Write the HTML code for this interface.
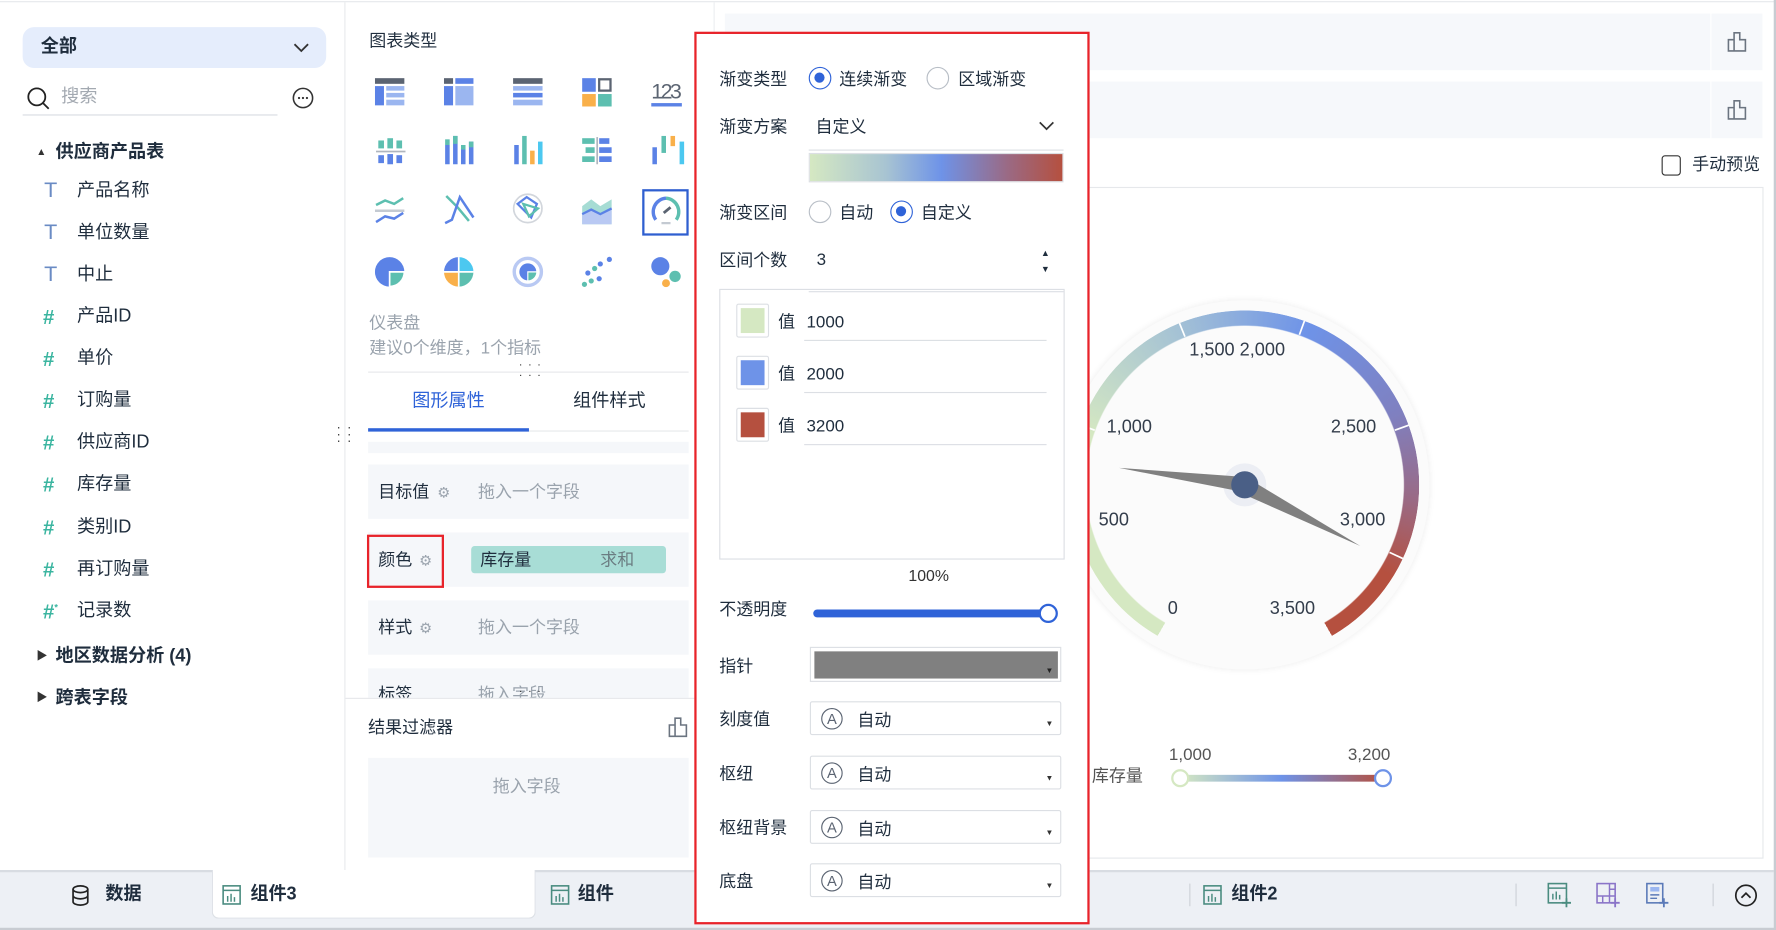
<!DOCTYPE html>
<html><head><meta charset="utf-8">
<style>
*{box-sizing:border-box;margin:0;padding:0}
html,body{width:1776px;height:930px;overflow:hidden;background:#fff}
body{font-family:"Liberation Sans","Noto Sans CJK SC",sans-serif;color:#1f2d3d}
#w{position:absolute;left:0;top:0;width:1568px;height:821px;transform:scale(1.13265,1.1328);transform-origin:0 0;background:#fff;font-size:15px}
.a{position:absolute}
.t{position:absolute;white-space:nowrap;line-height:1}
.g{color:#9aa3ad}
.b{font-weight:bold}
.row{position:absolute;left:325px;width:283px;height:48px;background:#f5f7fa}
.lbl{position:absolute;left:635px;font-size:15px;color:#1f2d3d;white-space:nowrap;line-height:1}
.radio{position:absolute;width:20px;height:20px;border:1px solid #b8bec6;border-radius:50%;background:#fff}
.radio.on{border:1.5px solid #2f63d8}
.radio.on::after{content:"";position:absolute;left:4px;top:4px;width:9px;height:9px;border-radius:50%;background:#2f63d8}
.sel{position:absolute;left:715px;width:222px;height:30px;border:1px solid #dcdfe4;border-radius:2px;background:#fff}
.sel .ic{position:absolute;left:9px;top:5px;width:19px;height:19px;border:1.5px solid #5b6472;border-radius:50%;font-size:13px;text-align:center;line-height:17px;color:#5b6472}
.sel .tx{position:absolute;left:41px;top:6px;font-size:15px}
.sel .ar{position:absolute;right:6px;top:16px;font-size:7px;color:#333}
.sw{position:absolute;left:650px;width:29px;height:30px;border:1px solid #dcdfe4;background:#fff;border-radius:2px}
.sw i{position:absolute;left:3px;top:3px;width:21px;height:22px}
.ul{position:absolute;height:1px;background:#dcdfe4}
.tree .t{margin-top:2px}
</style></head><body><div id="w">

<div class="a" style="left:0;top:1px;width:1568px;height:1px;background:#e6e8eb"></div>

<!-- LEFT SIDEBAR -->
<div class="a" style="left:304px;top:2px;width:1px;height:766px;background:#e8eaed"></div>
<div class="a" style="left:20px;top:24px;width:268px;height:36px;background:#e5edfc;border-radius:10px"></div>
<div class="t b" style="left:36px;top:34px;font-size:16px">全部</div>
<svg class="a" style="left:258px;top:36px" width="16" height="12"><path d="M2 3l6 6 6-6" fill="none" stroke="#333" stroke-width="1.6"/></svg>
<svg class="a" style="left:23px;top:76px" width="22" height="22"><circle cx="9.5" cy="9.5" r="7.5" fill="none" stroke="#222" stroke-width="1.6"/><path d="M15 15l5 5" stroke="#222" stroke-width="1.6"/></svg>
<div class="t" style="left:54px;top:78px;font-size:16px;color:#a3a9b1">搜索</div>
<div class="a" style="left:20px;top:101px;width:225px;height:1px;background:#d9dce1"></div>
<svg class="a" style="left:257px;top:76px" width="21" height="21"><circle cx="10.5" cy="10.5" r="8.5" fill="none" stroke="#333" stroke-width="1.4"/><circle cx="7" cy="10.5" r="1" fill="#333"/><circle cx="10.5" cy="10.5" r="1" fill="#333"/><circle cx="14" cy="10.5" r="1" fill="#333"/></svg>
<div class="tree">
<div class="t" style="left:32px;top:128px;font-size:9px;color:#333">▲</div>
<div class="t b" style="left:49px;top:125px;font-size:16px;color:#1f2d3d">供应商产品表</div>
<div class="t" style="left:39px;top:157px;font-size:19px;color:#6a8bc4">T</div><div class="t" style="left:68px;top:159px;font-size:16px">产品名称</div>
<div class="t" style="left:39px;top:194px;font-size:19px;color:#6a8bc4">T</div><div class="t" style="left:68px;top:196px;font-size:16px">单位数量</div>
<div class="t" style="left:39px;top:231px;font-size:19px;color:#6a8bc4">T</div><div class="t" style="left:68px;top:233px;font-size:16px">中止</div>
<div class="t b" style="left:38px;top:269px;font-size:18px;color:#3bb5a0">#</div><div class="t" style="left:68px;top:270px;font-size:16px">产品ID</div>
<div class="t b" style="left:38px;top:306px;font-size:18px;color:#3bb5a0">#</div><div class="t" style="left:68px;top:307px;font-size:16px">单价</div>
<div class="t b" style="left:38px;top:343px;font-size:18px;color:#3bb5a0">#</div><div class="t" style="left:68px;top:344px;font-size:16px">订购量</div>
<div class="t b" style="left:38px;top:380px;font-size:18px;color:#3bb5a0">#</div><div class="t" style="left:68px;top:381px;font-size:16px">供应商ID</div>
<div class="t b" style="left:38px;top:417px;font-size:18px;color:#3bb5a0">#</div><div class="t" style="left:68px;top:418px;font-size:16px">库存量</div>
<div class="t b" style="left:38px;top:455px;font-size:18px;color:#3bb5a0">#</div><div class="t" style="left:68px;top:456px;font-size:16px">类别ID</div>
<div class="t b" style="left:38px;top:492px;font-size:18px;color:#3bb5a0">#</div><div class="t" style="left:68px;top:493px;font-size:16px">再订购量</div>
<div class="t b" style="left:38px;top:529px;font-size:18px;color:#3bb5a0">#<sup style="font-size:8px">*</sup></div><div class="t" style="left:68px;top:530px;font-size:16px">记录数</div>
<div class="t" style="left:32px;top:573px;font-size:10px;color:#333">▶</div>
<div class="t b" style="left:49px;top:570px;font-size:16px">地区数据分析 (4)</div>
<div class="t" style="left:32px;top:610px;font-size:10px;color:#333">▶</div>
<div class="t b" style="left:49px;top:607px;font-size:16px">跨表字段</div>
</div>
<div class="t" style="left:297px;top:374px;font-size:12px;color:#444;line-height:6px;letter-spacing:1px">· ·<br>· ·<br>· ·</div>

<!-- MIDDLE PANEL -->
<div class="t" style="left:326px;top:29px;font-size:15px">图表类型</div>
<svg class="a" style="left:331px;top:67px" width="280" height="190">
 <g transform="translate(0,2)"><rect x="0" y="0" width="26" height="5" fill="#5b6472"/><rect x="0" y="7" width="8" height="17" fill="#5b82e6"/><rect x="10" y="7" width="16" height="4" fill="#9bb6f0"/><rect x="10" y="13" width="16" height="4" fill="#9bb6f0"/><rect x="10" y="19" width="16" height="5" fill="#9bb6f0"/></g>
 <g transform="translate(61,2)"><rect x="0" y="0" width="8" height="5" fill="#5b6472"/><rect x="10" y="0" width="16" height="5" fill="#5b82e6"/><rect x="0" y="7" width="8" height="17" fill="#5b82e6"/><rect x="10" y="7" width="16" height="17" fill="#9bb6f0"/></g>
 <g transform="translate(122,2)"><rect x="0" y="0" width="26" height="5" fill="#5b6472"/><rect x="0" y="7" width="26" height="4" fill="#9bb6f0"/><rect x="0" y="13" width="26" height="4" fill="#5b82e6"/><rect x="0" y="19" width="26" height="5" fill="#9bb6f0"/></g>
 <g transform="translate(183,2)"><rect x="0" y="0" width="12" height="12" fill="#5b82e6"/><rect x="15" y="1" width="10" height="10" fill="none" stroke="#5b6472" stroke-width="2"/><rect x="0" y="14" width="12" height="11" fill="#f9b04a"/><rect x="14" y="14" width="12" height="11" fill="#5dbfb0"/></g>
 <text x="244" y="20" font-size="19" fill="#5b6472" font-family="Liberation Sans" textLength="27">123</text><rect x="244" y="24" width="27" height="3" fill="#5b82e6"/>
 <g transform="translate(1,55)"><rect x="2" y="2" width="5" height="7" fill="#5dbfb0"/><rect x="10" y="0" width="5" height="9" fill="#5dbfb0"/><rect x="18" y="2" width="5" height="7" fill="#5dbfb0"/><rect x="0" y="11" width="26" height="1.5" fill="#b0b6be"/><rect x="2" y="15" width="5" height="7" fill="#5b82e6"/><rect x="10" y="14" width="5" height="9" fill="#5b82e6"/><rect x="18" y="15" width="5" height="7" fill="#5b82e6"/></g>
 <g transform="translate(62,53)"><rect x="0" y="8" width="4" height="17" fill="#5b82e6"/><rect x="0" y="3" width="4" height="5" fill="#5dbfb0"/><rect x="7" y="0" width="4" height="25" fill="#5b82e6"/><rect x="7" y="0" width="4" height="7" fill="#5dbfb0"/><rect x="14" y="12" width="4" height="13" fill="#5b82e6"/><rect x="14" y="8" width="4" height="4" fill="#5dbfb0"/><rect x="21" y="5" width="4" height="20" fill="#5b82e6"/><rect x="21" y="5" width="4" height="5" fill="#5dbfb0"/></g>
 <g transform="translate(123,53)"><rect x="0" y="8" width="4" height="17" fill="#5b82e6"/><rect x="7" y="0" width="4" height="25" fill="#5dbfb0"/><rect x="14" y="13" width="4" height="12" fill="#f9b04a"/><rect x="21" y="5" width="4" height="20" fill="#4cc8f0"/></g>
 <g transform="translate(183,54)"><rect x="0" y="1" width="11" height="5" fill="#5dbfb0"/><rect x="15" y="1" width="9" height="5" fill="#5b82e6"/><rect x="3" y="9" width="8" height="5" fill="#5dbfb0"/><rect x="15" y="9" width="11" height="5" fill="#5b82e6"/><rect x="0" y="17" width="11" height="5" fill="#5dbfb0"/><rect x="15" y="17" width="11" height="5" fill="#5b82e6"/><rect x="12.5" y="0" width="1.5" height="24" fill="#b0b6be"/></g>
 <g transform="translate(245,53)"><rect x="0" y="10" width="4" height="15" fill="#5b82e6"/><rect x="8" y="0" width="4" height="15" fill="#5dbfb0"/><rect x="16" y="0" width="4" height="9" fill="#f9b04a"/><rect x="24" y="5" width="4" height="20" fill="#4cc8f0"/></g>
 <g transform="translate(0,106)" fill="none" stroke-width="2.2"><path d="M1 8l8-4 8 3 8-5" stroke="#5dbfb0"/><path d="M0 13h26" stroke="#c4cad2"/><path d="M1 23l8-5 8 2 8-5" stroke="#5b82e6"/></g>
 <g transform="translate(61,104)" fill="none" stroke-width="2.2"><path d="M2 2l10 10 10 12" stroke="#5dbfb0"/><path d="M1 26l6-3 7-20 12 18" stroke="#5b82e6"/></g>
 <g transform="translate(122,104)" fill="none"><circle cx="13" cy="13" r="12.5" stroke="#d2d6dc" stroke-width="1.5"/><path d="M4 9l8-6 9 6-5 12z" stroke="#5b82e6" stroke-width="2"/><path d="M9 9l13 4-8 7z" stroke="#5dbfb0" stroke-width="2"/></g>
 <g transform="translate(183,105)"><path d="M0 10l8-6 8 6 10-6v22H0z" fill="#5dbfb0" opacity=".55"/><path d="M0 17l8-4 8 4 10-5v14H0z" fill="#b9c9f3"/><path d="M0 17l8-4 8 4 10-5" fill="none" stroke="#5b82e6" stroke-width="2"/></g>
 <g transform="translate(243,106)" fill="none" stroke-width="3"><path d="M5 21A12 12 0 0 1 14 2" stroke="#5b82e6"/><path d="M14 2A12 12 0 0 1 23 21" stroke="#5dbfb0"/><path d="M10 24h8" stroke="#c4cad2" stroke-width="2"/><path d="M12 15l6-5" stroke="#5b6472" stroke-width="2.5"/></g>
 <g transform="translate(0,160)"><circle cx="13" cy="13" r="13" fill="#5b82e6"/><path d="M13 13h13a13 13 0 0 1-13 13z" fill="#5dbfb0" stroke="#fff" stroke-width="1.5"/></g>
 <g transform="translate(61,160)"><path d="M13 13V0a13 13 0 0 0-13 13z" fill="#5b82e6"/><path d="M13 13V0a13 13 0 0 1 13 13z" fill="#4cc8f0"/><path d="M13 13H0a13 13 0 0 0 13 13z" fill="#f9b04a"/><path d="M13 13h13a13 13 0 0 1-13 13z" fill="#5dbfb0"/><path d="M13 0v26M0 13h26" stroke="#fff" stroke-width="1.5"/></g>
 <g transform="translate(122,160)"><circle cx="13" cy="13" r="12" fill="none" stroke="#b9c9f3" stroke-width="3"/><circle cx="13" cy="13" r="7.5" fill="#5b82e6"/><path d="M13 13h8a8 8 0 0 1-8 8z" fill="#5dbfb0" stroke="#fff" stroke-width="1"/></g>
 <g transform="translate(183,160)"><circle cx="2" cy="24" r="2.3" fill="#5dbfb0"/><circle cx="8" cy="21" r="2.3" fill="#5dbfb0"/><circle cx="15" cy="19" r="2.3" fill="#5b82e6"/><circle cx="5" cy="14" r="2.3" fill="#5b82e6"/><circle cx="11" cy="10" r="2.3" fill="#5dbfb0"/><circle cx="16" cy="6" r="2.3" fill="#5b82e6"/><circle cx="24" cy="2" r="2.3" fill="#5b82e6"/></g>
 <g transform="translate(244,160)"><circle cx="8" cy="8" r="8" fill="#5b82e6"/><circle cx="21" cy="17" r="5" fill="#5dbfb0"/><circle cx="13" cy="23" r="3.5" fill="#f9b04a"/></g>
</svg>
<div class="a" style="left:567px;top:167px;width:41px;height:41px;border:2px solid #2f5fd0"></div>
<div class="t g" style="left:326px;top:278px;font-size:15px">仪表盘</div>
<div class="t g" style="left:326px;top:300px;font-size:15px">建议0个维度，1个指标</div>
<div class="a" style="left:325px;top:328px;width:283px;height:1px;background:#e6e8eb"></div>
<div class="t" style="left:458px;top:318px;font-size:10px;color:#333;letter-spacing:1px;line-height:9px">· · ·<br>· · ·</div>
<div class="t" style="left:364px;top:347px;font-size:16px;color:#2f63d8">图形属性</div>
<div class="t" style="left:506px;top:347px;font-size:16px">组件样式</div>
<div class="a" style="left:325px;top:380px;width:283px;height:1px;background:#e6e8eb"></div>
<div class="a" style="left:325px;top:378px;width:142px;height:3px;background:#2f63d8"></div>
<div class="row" style="top:390px;height:10px"></div>
<div class="row" style="top:410px"></div>
<div class="t" style="left:334px;top:427px;font-size:15px">目标值</div><div class="t g" style="left:386px;top:428px;font-size:13px">⚙</div>
<div class="t g" style="left:422px;top:427px;font-size:15px">拖入一个字段</div>
<div class="row" style="top:470px"></div>
<div class="a" style="left:324px;top:472px;width:68px;height:47px;border:2px solid #e8232a"></div>
<div class="t" style="left:334px;top:487px;font-size:15px">颜色</div><div class="t g" style="left:370px;top:488px;font-size:13px">⚙</div>
<div class="a" style="left:416px;top:482px;width:172px;height:24px;background:#a8ddd6;border-radius:3px"></div>
<div class="t" style="left:424px;top:487px;font-size:15px">库存量</div>
<div class="t" style="left:530px;top:487px;font-size:15px;color:#6b7d82">求和</div>
<div class="row" style="top:530px"></div>
<div class="t" style="left:334px;top:547px;font-size:15px">样式</div><div class="t g" style="left:370px;top:548px;font-size:13px">⚙</div>
<div class="t g" style="left:422px;top:547px;font-size:15px">拖入一个字段</div>
<div class="row" style="top:590px;height:26px;overflow:hidden"><div class="t" style="left:9px;top:16px;font-size:15px;color:#1f2d3d">标签</div><div class="t g" style="left:97px;top:16px;font-size:15px">拖入字段</div></div>
<div class="a" style="left:305px;top:616px;width:325px;height:1px;background:#e6e8eb"></div>
<div class="t" style="left:458px;top:606px;font-size:10px;color:#333;letter-spacing:1px">· · ·</div>
<div class="t" style="left:325px;top:635px;font-size:15px">结果过滤器</div>
<svg class="a" style="left:590px;top:633px" width="17" height="18"><path d="M6 1h5v6h5v10H1V7h5z M6 7v10" fill="none" stroke="#6b7480" stroke-width="1.4"/></svg>
<div class="a" style="left:325px;top:669px;width:283px;height:88px;background:#f5f7fa"></div>
<div class="t g" style="left:435px;top:687px;font-size:15px">拖入字段</div>
<div class="a" style="left:630px;top:2px;width:1px;height:766px;background:#eceef1"></div>

<!-- RIGHT AREA -->
<div class="a" style="left:640px;top:12px;width:870px;height:50px;background:#f6f8fb"></div>
<div class="a" style="left:1511px;top:12px;width:45px;height:50px;background:#f6f8fb"></div>
<div class="a" style="left:640px;top:72px;width:870px;height:50px;background:#f6f8fb"></div>
<div class="a" style="left:1511px;top:72px;width:45px;height:50px;background:#f6f8fb"></div>
<svg class="a" style="left:1525px;top:28px" width="17" height="18"><path d="M6 1h5v6h5v10H1V7h5z M6 7v10" fill="none" stroke="#6b7480" stroke-width="1.4"/></svg>
<svg class="a" style="left:1525px;top:88px" width="17" height="18"><path d="M6 1h5v6h5v10H1V7h5z M6 7v10" fill="none" stroke="#6b7480" stroke-width="1.4"/></svg>
<div class="a" style="left:1467px;top:137px;width:17px;height:18px;border:1.5px solid #333;border-radius:3px"></div>
<div class="t" style="left:1494px;top:138px;font-size:15px">手动预览</div>
<div class="a" style="left:880px;top:165px;width:677px;height:593px;border:1px solid #e6e8eb"></div>

<!-- Gauge -->
<div class="a" style="left:936px;top:265px;width:326px;height:326px;border-radius:50%;background:#fbfbfb;box-shadow:0 0 6px rgba(0,0,0,.08)"></div>
<div class="a" style="left:945px;top:274px;width:308px;height:308px;border-radius:50%;background:conic-gradient(from -150deg,#d5e8c2 0deg,#d5e8c2 78deg,#a6c3d4 125deg,#6e93e8 172deg,#7f80c0 215deg,#9a6a85 245deg,#b5503f 272deg,#b5503f 300deg,transparent 300deg);-webkit-mask:radial-gradient(circle,transparent 140px,#000 141px,#000 154px,transparent 155px);mask:radial-gradient(circle,transparent 140px,#000 141px,#000 154px,transparent 155px)"></div>
<svg class="a" style="left:945px;top:274px" width="308" height="308">
 <g stroke="#fff" stroke-width="1.5">
  <line x1="154" y1="13" x2="154" y2="0" transform="rotate(-70 154 154)"/>
  <line x1="154" y1="13" x2="154" y2="0" transform="rotate(-22 154 154)"/>
  <line x1="154" y1="13" x2="154" y2="0" transform="rotate(20 154 154)"/>
  <line x1="154" y1="13" x2="154" y2="0" transform="rotate(70 154 154)"/>
  <line x1="154" y1="13" x2="154" y2="0" transform="rotate(115 154 154)"/>
 </g>
 <circle cx="154" cy="154" r="19" fill="#eceef4"/>
 <polygon points="43,139 153,147 151,160" fill="#808080"/>
 <polygon points="150,161 158,149 256,208" fill="#808080"/>
 <circle cx="154" cy="154" r="12" fill="#4a5f86"/>
</svg>
<div class="t" style="left:1050px;top:302px;font-size:16px;color:#333d4b">1,500 2,000</div>
<div class="t" style="left:977px;top:370px;font-size:16px;color:#333d4b">1,000</div>
<div class="t" style="left:1175px;top:370px;font-size:16px;color:#333d4b">2,500</div>
<div class="t" style="left:970px;top:452px;font-size:16px;color:#333d4b">500</div>
<div class="t" style="left:1183px;top:452px;font-size:16px;color:#333d4b">3,000</div>
<div class="t" style="left:1031px;top:530px;font-size:16px;color:#333d4b">0</div>
<div class="t" style="left:1121px;top:530px;font-size:16px;color:#333d4b">3,500</div>
<div class="t" style="left:964px;top:678px;font-size:15px;color:#555">库存量</div>
<div class="t" style="left:1032px;top:659px;font-size:15px;color:#555">1,000</div>
<div class="t" style="left:1190px;top:659px;font-size:15px;color:#555">3,200</div>
<div class="a" style="left:1042px;top:684px;width:179px;height:6px;background:linear-gradient(90deg,#d5e8c2,#6e93e8 50%,#b5503f)"></div>
<div class="a" style="left:1034px;top:679px;width:16px;height:16px;border-radius:50%;border:2.5px solid #d5e8c2;background:#fff"></div>
<div class="a" style="left:1213px;top:679px;width:16px;height:16px;border-radius:50%;border:2.5px solid #6e93e8;background:#fff"></div>

<!-- BOTTOM BAR -->
<div class="a" style="left:0;top:768px;width:1566px;height:53px;background:#edf0f5;border-top:2px solid #d8dce2"></div>
<div class="a" style="left:1566px;top:0;width:2px;height:821px;background:#c8ccd2"></div>
<div class="a" style="left:0;top:819px;width:1568px;height:2px;background:#c8ccd2"></div>
<svg class="a" style="left:63px;top:781px" width="16" height="19"><ellipse cx="8" cy="4" rx="6.5" ry="3" fill="none" stroke="#222" stroke-width="1.5"/><path d="M1.5 4v11c0 1.7 3 3 6.5 3s6.5-1.3 6.5-3V4M1.5 9.5c0 1.7 3 3 6.5 3s6.5-1.3 6.5-3" fill="none" stroke="#222" stroke-width="1.5"/></svg>
<div class="t b" style="left:93px;top:782px;font-size:16px">数据</div>
<div class="a" style="left:187px;top:768px;width:286px;height:43px;background:#fff;border:1px solid #dde1e6;border-top:none;border-radius:0 0 6px 6px"></div>
<svg class="a" style="left:196px;top:781px" width="17" height="18"><rect x="1" y="1" width="15" height="16" fill="none" stroke="#4a8c80" stroke-width="1.4"/><path d="M1 5h15" stroke="#4a8c80" stroke-width="1.4"/><path d="M5 15v-5M8 15V8M11 15v-4" stroke="#4a8c80" stroke-width="1.3"/></svg>
<div class="t b" style="left:221px;top:782px;font-size:16px">组件3</div>
<svg class="a" style="left:486px;top:781px" width="17" height="18"><rect x="1" y="1" width="15" height="16" fill="none" stroke="#4a8c80" stroke-width="1.4"/><path d="M1 5h15" stroke="#4a8c80" stroke-width="1.4"/><path d="M5 15v-5M8 15V8M11 15v-4" stroke="#4a8c80" stroke-width="1.3"/></svg>
<div class="t b" style="left:510px;top:782px;font-size:16px">组件</div>
<div class="a" style="left:1050px;top:780px;width:1px;height:20px;background:#cdd1d7"></div>
<svg class="a" style="left:1062px;top:781px" width="17" height="18"><rect x="1" y="1" width="15" height="16" fill="none" stroke="#4a8c80" stroke-width="1.4"/><path d="M1 5h15" stroke="#4a8c80" stroke-width="1.4"/><path d="M5 15v-5M8 15V8M11 15v-4" stroke="#4a8c80" stroke-width="1.3"/></svg>
<div class="t b" style="left:1087px;top:782px;font-size:16px">组件2</div>
<div class="a" style="left:1338px;top:780px;width:1px;height:20px;background:#cdd1d7"></div>
<svg class="a" style="left:1366px;top:779px" width="22" height="22"><rect x="1" y="1" width="16" height="17" fill="none" stroke="#4a8c80" stroke-width="1.4"/><path d="M1 5h16M5 15v-5M8 15V8M11 15v-4" stroke="#4a8c80" stroke-width="1.3"/><path d="M17 14v8M13 18h8" stroke="#4a8c80" stroke-width="1.6"/></svg>
<svg class="a" style="left:1409px;top:779px" width="22" height="22"><rect x="1" y="1" width="16" height="17" fill="none" stroke="#8a74c8" stroke-width="1.4"/><path d="M12 1v17M1 12h16M12 6h5M6 12v6" stroke="#8a74c8" stroke-width="1.3"/><path d="M17 14v8M13 18h8" stroke="#8a74c8" stroke-width="1.6"/></svg>
<svg class="a" style="left:1453px;top:779px" width="22" height="22"><rect x="1" y="1" width="14" height="17" fill="none" stroke="#5b7ab8" stroke-width="1.4"/><rect x="4" y="4" width="8" height="4" fill="#9bb6f0"/><path d="M4 11h8M4 14h6" stroke="#5b7ab8" stroke-width="1.3"/><path d="M16 14v8M12 18h8" stroke="#5b7ab8" stroke-width="1.6"/></svg>
<div class="a" style="left:1512px;top:780px;width:1px;height:20px;background:#cdd1d7"></div>
<svg class="a" style="left:1531px;top:780px" width="21" height="21"><circle cx="10.5" cy="10.5" r="9" fill="none" stroke="#222" stroke-width="1.5"/><path d="M6.5 12.5l4-4 4 4" fill="none" stroke="#222" stroke-width="1.5"/></svg>

<!-- FLOATING PANEL -->
<div class="a" style="left:613px;top:28px;width:349px;height:788px;background:#fff;border:2px solid #e8232a"></div>
<div class="lbl" style="top:63px">渐变类型</div>
<div class="radio on" style="left:714px;top:59px"></div><div class="t" style="left:741px;top:63px">连续渐变</div>
<div class="radio" style="left:818px;top:59px"></div><div class="t" style="left:846px;top:63px">区域渐变</div>
<div class="lbl" style="top:105px">渐变方案</div>
<div class="t" style="left:720px;top:105px">自定义</div>
<svg class="a" style="left:916px;top:105px" width="16" height="12"><path d="M2 3l6 6 6-6" fill="none" stroke="#333" stroke-width="1.5"/></svg>
<div class="ul" style="left:714px;top:132px;width:225px"></div>
<div class="a" style="left:714px;top:135px;width:225px;height:26px;border:1px solid #dcdfe4;background:linear-gradient(90deg,#d5e8c2 0%,#a8c4d2 30%,#6e93e8 52%,#9a6a85 78%,#b5503f 100%)"></div>
<div class="lbl" style="top:181px">渐变区间</div>
<div class="radio" style="left:714px;top:177px"></div><div class="t" style="left:741px;top:181px">自动</div>
<div class="radio on" style="left:786px;top:177px"></div><div class="t" style="left:813px;top:181px">自定义</div>
<div class="lbl" style="top:223px">区间个数</div>
<div class="t" style="left:721px;top:222px">3</div>
<div class="t" style="left:919px;top:217px;font-size:8px;line-height:14px">▲<br>▼</div>
<div class="ul" style="left:714px;top:257px;width:225px"></div>
<div class="a" style="left:635px;top:255px;width:305px;height:239px;border:1px solid #dcdfe4"></div>
<div class="sw" style="top:268px"><i style="background:#d5e8c2"></i></div>
<div class="t" style="left:687px;top:277px">值</div><div class="t" style="left:712px;top:277px">1000</div>
<div class="ul" style="left:710px;top:300px;width:214px"></div>
<div class="sw" style="top:314px"><i style="background:#6e93e8"></i></div>
<div class="t" style="left:687px;top:323px">值</div><div class="t" style="left:712px;top:323px">2000</div>
<div class="ul" style="left:710px;top:346px;width:214px"></div>
<div class="sw" style="top:360px"><i style="background:#b5503f"></i></div>
<div class="t" style="left:687px;top:369px">值</div><div class="t" style="left:712px;top:369px">3200</div>
<div class="ul" style="left:710px;top:392px;width:214px"></div>
<div class="t" style="left:802px;top:501px;font-size:14px;color:#333">100%</div>
<div class="lbl" style="top:531px">不透明度</div>
<div class="a" style="left:718px;top:538px;width:208px;height:7px;border-radius:4px;background:#2f63d8"></div>
<div class="a" style="left:917px;top:533px;width:17px;height:17px;border-radius:50%;border:2.5px solid #2f63d8;background:#fff"></div>
<div class="lbl" style="top:581px">指针</div>
<div class="a" style="left:715px;top:571px;width:222px;height:31px;border:1px solid #dcdfe4;background:#fff"><div class="a" style="left:3px;top:3px;width:215px;height:24px;background:#808080"></div><div class="a" style="right:6px;top:17px;font-size:7px;color:#222">▼</div></div>
<div class="lbl" style="top:628px">刻度值</div>
<div class="sel" style="top:619px"><div class="ic">A</div><div class="tx" style="top:5px">自动</div><div class="ar">▼</div></div>
<div class="lbl" style="top:676px">枢纽</div>
<div class="sel" style="top:667px"><div class="ic">A</div><div class="tx" style="top:5px">自动</div><div class="ar">▼</div></div>
<div class="lbl" style="top:724px">枢纽背景</div>
<div class="sel" style="top:715px"><div class="ic">A</div><div class="tx" style="top:5px">自动</div><div class="ar">▼</div></div>
<div class="lbl" style="top:771px">底盘</div>
<div class="sel" style="top:762px"><div class="ic">A</div><div class="tx" style="top:5px">自动</div><div class="ar">▼</div></div>

</div></body></html>
